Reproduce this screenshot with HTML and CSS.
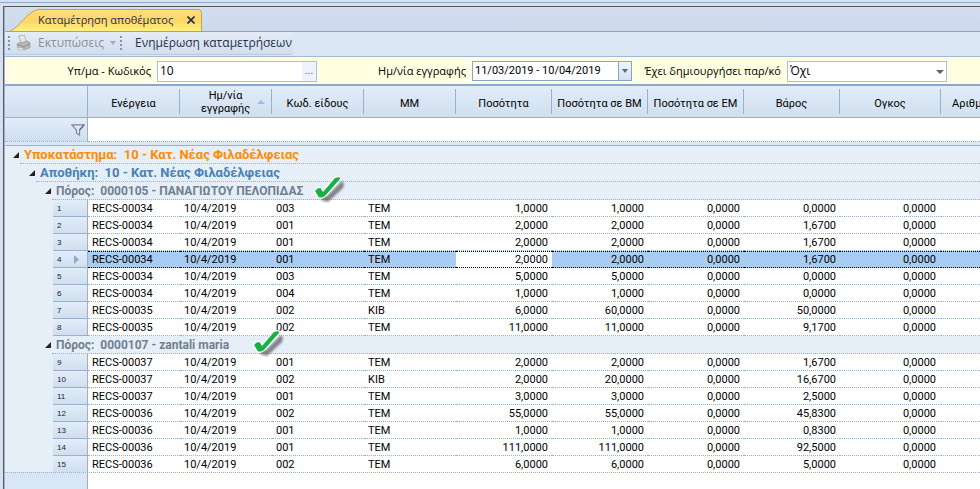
FILE: index.html
```html
<!DOCTYPE html>
<html lang="el">
<head>
<meta charset="utf-8">
<title>Καταμέτρηση αποθέματος</title>
<link rel="stylesheet" href="styles.css">
</head>
<body>
<div class="strip"></div>
<main class="window">
  <nav class="tabs">
    <svg class="tab-shape" viewBox="0 0 192 22" aria-hidden="true">
      <defs><linearGradient id="gold" x1="0" y1="0" x2="0" y2="1"><stop offset="0" stop-color="#ffdf80"/><stop offset=".5" stop-color="#ffd566"/><stop offset="1" stop-color="#fff07e"/></linearGradient></defs>
      <path d="M0 22C8 20 18 1 29 .5H188Q191.500.5 191.500 4V22" fill="url(#gold)" stroke="#c2a35c"/>
    </svg>
    <a class="tab-label" href="#grid">Καταμέτρηση αποθέματος</a>
    <button class="tab-close" aria-label="Κλείσιμο"><svg viewBox="0 0 8 8"><path d="M.5.5l7 7M7.500.5l-7 7" stroke="#1e2f4f" stroke-width="1.600"/></svg></button>
  </nav>
  <div class="toolbar">
    <div class="tools">
      <span class="grip"></span>
      <button class="tool muted">
        <svg class="printer" viewBox="0 0 16 16" aria-hidden="true"><path d="M2.500 1l5.500-1 2.500 6-5 2z" fill="#e6e6e6" stroke="#aaa" stroke-width=".8"/><path d="M1 9l3-2 1.500 1.500L11 6l3 2v4.500L8 15l-6-2z" fill="#b9b9b9" stroke="#999" stroke-width=".8"/><path d="M1.500 9.500L8 12l6-3.500" fill="none" stroke="#8a8a8a" stroke-width="1"/><path d="M2 12l6 1.500-2 2-4-1z" fill="#e6e6e6" stroke="#aaa" stroke-width=".6"/></svg>
        Εκτυπώσεις
        <svg class="caret" viewBox="0 0 6 4" aria-hidden="true"><path d="M0 0h6L3 4z" fill="#a3a9b5"/></svg>
      </button>
      <span class="grip"></span>
      <button class="tool">Ενημέρωση καταμετρήσεων</button>
    </div>
  </div>
  <form class="filters">
    <div class="field">
      <label for="branch">Υπ/μα - Κωδικός</label>
      <div class="box"><input id="branch" class="large" value="10"><button type="button" class="more" aria-label="Αναζήτηση">...</button></div>
    </div>
    <div class="field">
      <label for="dates">Ημ/νία εγγραφής</label>
      <div class="box dates"><input id="dates" value="11/03/2019 - 10/04/2019"><button type="button" class="drop" aria-label="Ημερολόγιο"><svg class="caret" viewBox="0 0 6 4"><path d="M0 0h6L3 4z" fill="#5c6470"/></svg></button></div>
    </div>
    <div class="field">
      <label for="done">Έχει δημιουργήσει παρ/κό</label>
      <div class="box"><select id="done"><option>Όχι</option><option>Ναι</option></select><svg class="select-caret" viewBox="0 0 8 4" aria-hidden="true"><path d="M0 0h8L4 4z" fill="#5c6470"/></svg></div>
    </div>
  </form>
  <table class="grid" id="grid">
    <colgroup><col class="c-indent"><col class="c-num"><col class="c-text"><col class="c-text"><col class="c-text"><col class="c-text"><col class="c-qty"><col class="c-qty"><col class="c-qty"><col class="c-qty"><col class="c-vol"><col></colgroup>
    <thead>
      <tr class="heads">
        <td colspan="2" class="corner"></td>
        <th><span>Ενέργεια</span></th>
        <th><span class="sorted">Ημ/νία εγγραφής<svg viewBox="0 0 8 4" aria-hidden="true"><path d="M0 4h8L4 0z" fill="#94bdf0"/></svg></span></th>
        <th><span>Κωδ. είδους</span></th>
        <th><span>ΜΜ</span></th>
        <th><span>Ποσότητα</span></th>
        <th><span>Ποσότητα σε ΒΜ</span></th>
        <th><span>Ποσότητα σε ΕΜ</span></th>
        <th><span>Βάρος</span></th>
        <th><span>Ογκος</span></th>
        <th class="cut"><span>Αριθμ</span></th>
      </tr>
      <tr class="search">
        <td colspan="2" class="corner funnel"><svg viewBox="0 0 14 12" aria-hidden="true"><path d="M.8.8h12.400L8.500 6v5l-3-1.800V6z" fill="#e6eaf0" stroke="#7c8796" stroke-width="1.200"/><path d="M8.500 6L13 1" stroke="#6b7482" stroke-width="1.500"/></svg></td>
        <td colspan="10"></td>
      </tr>
      <tr class="divider"><td colspan="12"></td></tr>
    </thead>
    <tbody id="rows"></tbody>
  </table>
  <div class="rest"></div>
</main>
<script src="grid.js"></script>
</body>
</html>
```
FILE: styles.css
```css
* { box-sizing: border-box; }
body {
  margin: 0;
  height: 100vh;
  display: flex;
  flex-direction: column;
  overflow: hidden;
  background: #d5e1f0;
  color: #000;
  font: 11px/14px Roboto, "Liberation Sans", sans-serif;
}
button, input, select { font: inherit; color: inherit; border: 0; padding: 0; margin: 0; background: none; border-radius: 0; outline: 0; }
svg { display: block; }
.strip { height: 3px; flex: none; border-bottom: 1px solid #8fa8cc; }
.window {
  flex: 1;
  min-height: 0;
  margin: 3px 0 0 3px;
  border-top: 1px solid #5a5a5a;
  border-left: 1px solid #5a5a5a;
  padding-left: 1px;
  display: flex;
  flex-direction: column;
  overflow: hidden;
  background: #9db4d2;
}

.tabs {
  flex: none;
  height: 25px;
  position: relative;
  display: flex;
  align-items: center;
  padding: 2px 0 0 33px;
  background: linear-gradient(#d2deee, #cddaeb);
  border-bottom: 1px solid #8ba3c5;
}
.tab-shape { position: absolute; left: 5px; bottom: 0; width: 192px; height: 22px; }
.tab-label { position: relative; color: #1e2f4f; text-decoration: none; font: 11px/16px "Open Sans", "Noto Sans", sans-serif; width: 149px; white-space: nowrap; }
.tab-close { position: relative; }
.tab-close svg { width: 8px; height: 8px; }

.toolbar { flex: none; height: 25px; background: #dce7f5; border-bottom: 1px solid #a3b8d4; display: flex; }
.tools {
  display: flex;
  align-items: center;
  padding: 0 1px 0 3px;
  margin-bottom: 1px;
  background: linear-gradient(#e4ecf7, #d2deed);
  border-bottom: 1px solid #b9c8dd;
  border-radius: 0 3px 3px 0;
}
.grip { width: 2px; height: 14px; background: repeating-linear-gradient(#7f95bb 0 2px, transparent 2px 4px); }
.tool { display: flex; align-items: center; font: 12px/16px "Open Sans", "Noto Sans", sans-serif; color: #1e2f4f; padding-left: 13px; white-space: nowrap; }
.muted { color: #8a8f98; padding: 0 4px 0 6px; gap: 6px; }
.printer { width: 16px; height: 16px; }
.caret { width: 6px; height: 4px; }

.filters { flex: none; height: 27px; background: #ffffe1; display: grid; grid-template-columns: 312px 315px 315px; align-items: center; padding-top: 1px; }
.field { display: flex; justify-content: flex-end; align-items: center; gap: 6px; }
.field label { font: 11px/16px "Open Sans", "Noto Sans", sans-serif; white-space: nowrap; }
.box { position: relative; width: 160px; height: 21px; display: flex; background: #fff; border: 1px solid #abbedb; }
.box input, .box select { flex: 1; min-width: 0; padding: 0 2px; }
.box .large, .box select { font: 12px/16px "Open Sans", "Noto Sans", sans-serif; }
.box select { appearance: none; }
.more { width: 14px; background: #edf4fc; color: #5c6470; }
.dates { height: 20px; border-color: #8ba3c5; }
.drop { width: 13px; display: grid; place-items: center; border-left: 1px solid #8ba3c5; background: linear-gradient(#eef5fd, #d3e1f2); }
.select-caret { position: absolute; right: 2px; top: 8px; width: 8px; height: 4px; pointer-events: none; }

.grid { flex: none; width: 100%; table-layout: fixed; border-collapse: separate; border-spacing: 0; border-top: 2px solid #8fa8c9; }
.grid td, .grid th { padding: 0; font-weight: 400; white-space: nowrap; }
.c-indent { width: 48px; }
.c-num { width: 35px; }
.c-text { width: 92px; }
.c-qty { width: 96px; }
.c-vol { width: 101px; }

.heads > * { height: 32px; background: linear-gradient(#e2edfa, #d0deee); border-bottom: 1px solid #9bb0cc; line-height: 13px; }
.grid .corner { border-right: 1px solid #9bb0cc; }
.heads th span { position: relative; display: flex; height: 25px; padding-top: 3px; align-items: center; justify-content: center; border-right: 1px solid #9bb0cc; text-align: center; }
.heads .sorted { padding: 1px 20px 0; white-space: normal; }
.sorted svg { position: absolute; right: 6px; top: 11px; width: 8px; height: 4px; }
.heads .cut span { border: 0; justify-content: flex-start; padding-left: 11px; }
.search td { height: 24px; background: #fff; border-bottom: 1px dotted #8ba9d4; }
.search .funnel { background: linear-gradient(#e2edfa, #d0deee); }
.funnel svg { width: 14px; height: 12px; margin-left: 66px; }
.divider td { height: 4px; background: #dce8f5; border-bottom: 1px solid #9bb0cc; }

.group td { height: 18px; background: #e6eef8; }
.group div { position: relative; display: flex; align-items: center; gap: 5px; height: 18px; border-bottom: 1px dotted #94b0d6; font-size: 13px; font-weight: 700; white-space: pre; }
.group .twist { width: 6px; height: 6px; margin-left: -7px; }
.level1 div { margin-left: 15px; color: #ff8c00; }
.level2 div { margin-left: 31px; color: #4682b4; }
.group.level3 div { margin-left: 47px; color: #708090; font-size: 12px; }
.group .check { width: 36px; height: 34px; flex: none; z-index: 1; margin-left: 5px; }
.group .check.far { margin-left: 18px; }

.row td, .row th { height: 17px; line-height: 14px; background: #fff; border-bottom: 1px dotted #94b0d6; padding: 2px 4px 0; }
.row .indent { background: #e6eef8; border-bottom: 0; }
.row .num { position: relative; text-align: left; font: 8px/14px "Liberation Sans", sans-serif; color: #222; background: linear-gradient(#e2edfa, #d0deee); border-bottom: 1px solid #9bb0cc; border-right: 1px solid #9bb0cc; }
.row .amount { text-align: right; }
.row .volume { padding-right: 5px; }
.current td { background: #a9cdf2; border-top: 1px dotted #000; border-bottom: 1px dotted #000; padding-top: 1px; }
.current td.indent { border-top: 0; }
.current td.focus { background: #fff; }
.pointer { position: absolute; right: 8px; top: 4px; width: 5px; height: 9px; }
.rest { flex: 1; background: linear-gradient(90deg, #d8e6f5 82px, #9bb0cc 82px 83px, #fff 83px); border-top: 1px dotted #94b0d6; margin-top: -1px; position: relative; }
```
FILE: grid.js
```js
const twist = '<svg class="twist" viewBox="0 0 6 6" aria-hidden="true"><path d="M6 0V6H0z" fill="#222"/></svg>';
const check = far => `<svg class="check${far ? ' far' : ''}" viewBox="0 0 36 34" aria-hidden="true">
  <defs><filter id="soft" x="-20%" y="-20%" width="140%" height="140%"><feGaussianBlur stdDeviation="1.200"/></filter></defs>
  <path d="M8 19l6 3L29 7l2 3-1 4L15 28l-7-2z" fill="#555" opacity=".7" filter="url(#soft)"/>
  <path d="M2 17l2.500-2.500 3-.5L10 18 22 4l4.500-1 .5 2L12 22l-3 1.500H6z" fill="#18b045" stroke="#fff" stroke-width="2.400" stroke-linejoin="round" paint-order="stroke"/></svg>`;
const pointer = '<svg class="pointer" viewBox="0 0 5 9" aria-hidden="true"><path d="M0 0l5 4.500L0 9z" fill="#94a9c8"/></svg>';

const data = [
  { level: 1, text: 'Υποκατάστημα:  10 - Κατ. Νέας Φιλαδέλφειας' },
  { level: 2, text: 'Αποθήκη:  10 - Κατ. Νέας Φιλαδέλφειας' },
  { level: 3, text: 'Πόρος:  0000105 - ΠΑΝΑΓΙΩΤΟΥ ΠΕΛΟΠΙΔΑΣ', check: check(false) },
  ['34', '003', 'ΤΕΜ', '1', '1', '0,0000'],
  ['34', '001', 'ΤΕΜ', '2', '2', '1,6700'],
  ['34', '001', 'ΤΕΜ', '2', '2', '1,6700'],
  ['34', '001', 'ΤΕΜ', '2', '2', '1,6700'],
  ['34', '003', 'ΤΕΜ', '5', '5', '0,0000'],
  ['34', '004', 'ΤΕΜ', '1', '1', '0,0000'],
  ['35', '002', 'ΚΙΒ', '6', '60', '50,0000'],
  ['35', '002', 'ΤΕΜ', '11', '11', '9,1700'],
  { level: 3, text: 'Πόρος:  0000107 - zantali maria', check: check(true) },
  ['37', '001', 'ΤΕΜ', '2', '2', '1,6700'],
  ['37', '002', 'ΚΙΒ', '2', '20', '16,6700'],
  ['37', '001', 'ΤΕΜ', '3', '3', '2,5000'],
  ['36', '002', 'ΤΕΜ', '55', '55', '45,8300'],
  ['36', '001', 'ΤΕΜ', '1', '1', '0,8300'],
  ['36', '001', 'ΤΕΜ', '111', '111', '92,5000'],
  ['36', '002', 'ΤΕΜ', '6', '6', '5,0000']
];

let number = 0;
document.getElementById('rows').innerHTML = data.map(item => {
  if (item.level) {
    return `<tr class="group level${item.level}"><td colspan="12"><div>${twist}<span>${item.text}</span>${item.check || ''}</div></td></tr>`;
  }
  const [doc, code, unit, qty, base, weight] = item;
  const current = ++number === 4;
  return `<tr class="row${current ? ' current' : ''}"><td class="indent"></td>
    <th scope="row" class="num">${number}${current ? pointer : ''}</th>
    <td>RECS-000${doc}</td><td>10/4/2019</td><td>${code}</td><td>${unit}</td>
    <td class="amount${current ? ' focus' : ''}">${qty},0000</td><td class="amount">${base},0000</td><td class="amount">0,0000</td>
    <td class="amount">${weight}</td><td class="amount volume">0,0000</td><td></td></tr>`;
}).join('');
```
